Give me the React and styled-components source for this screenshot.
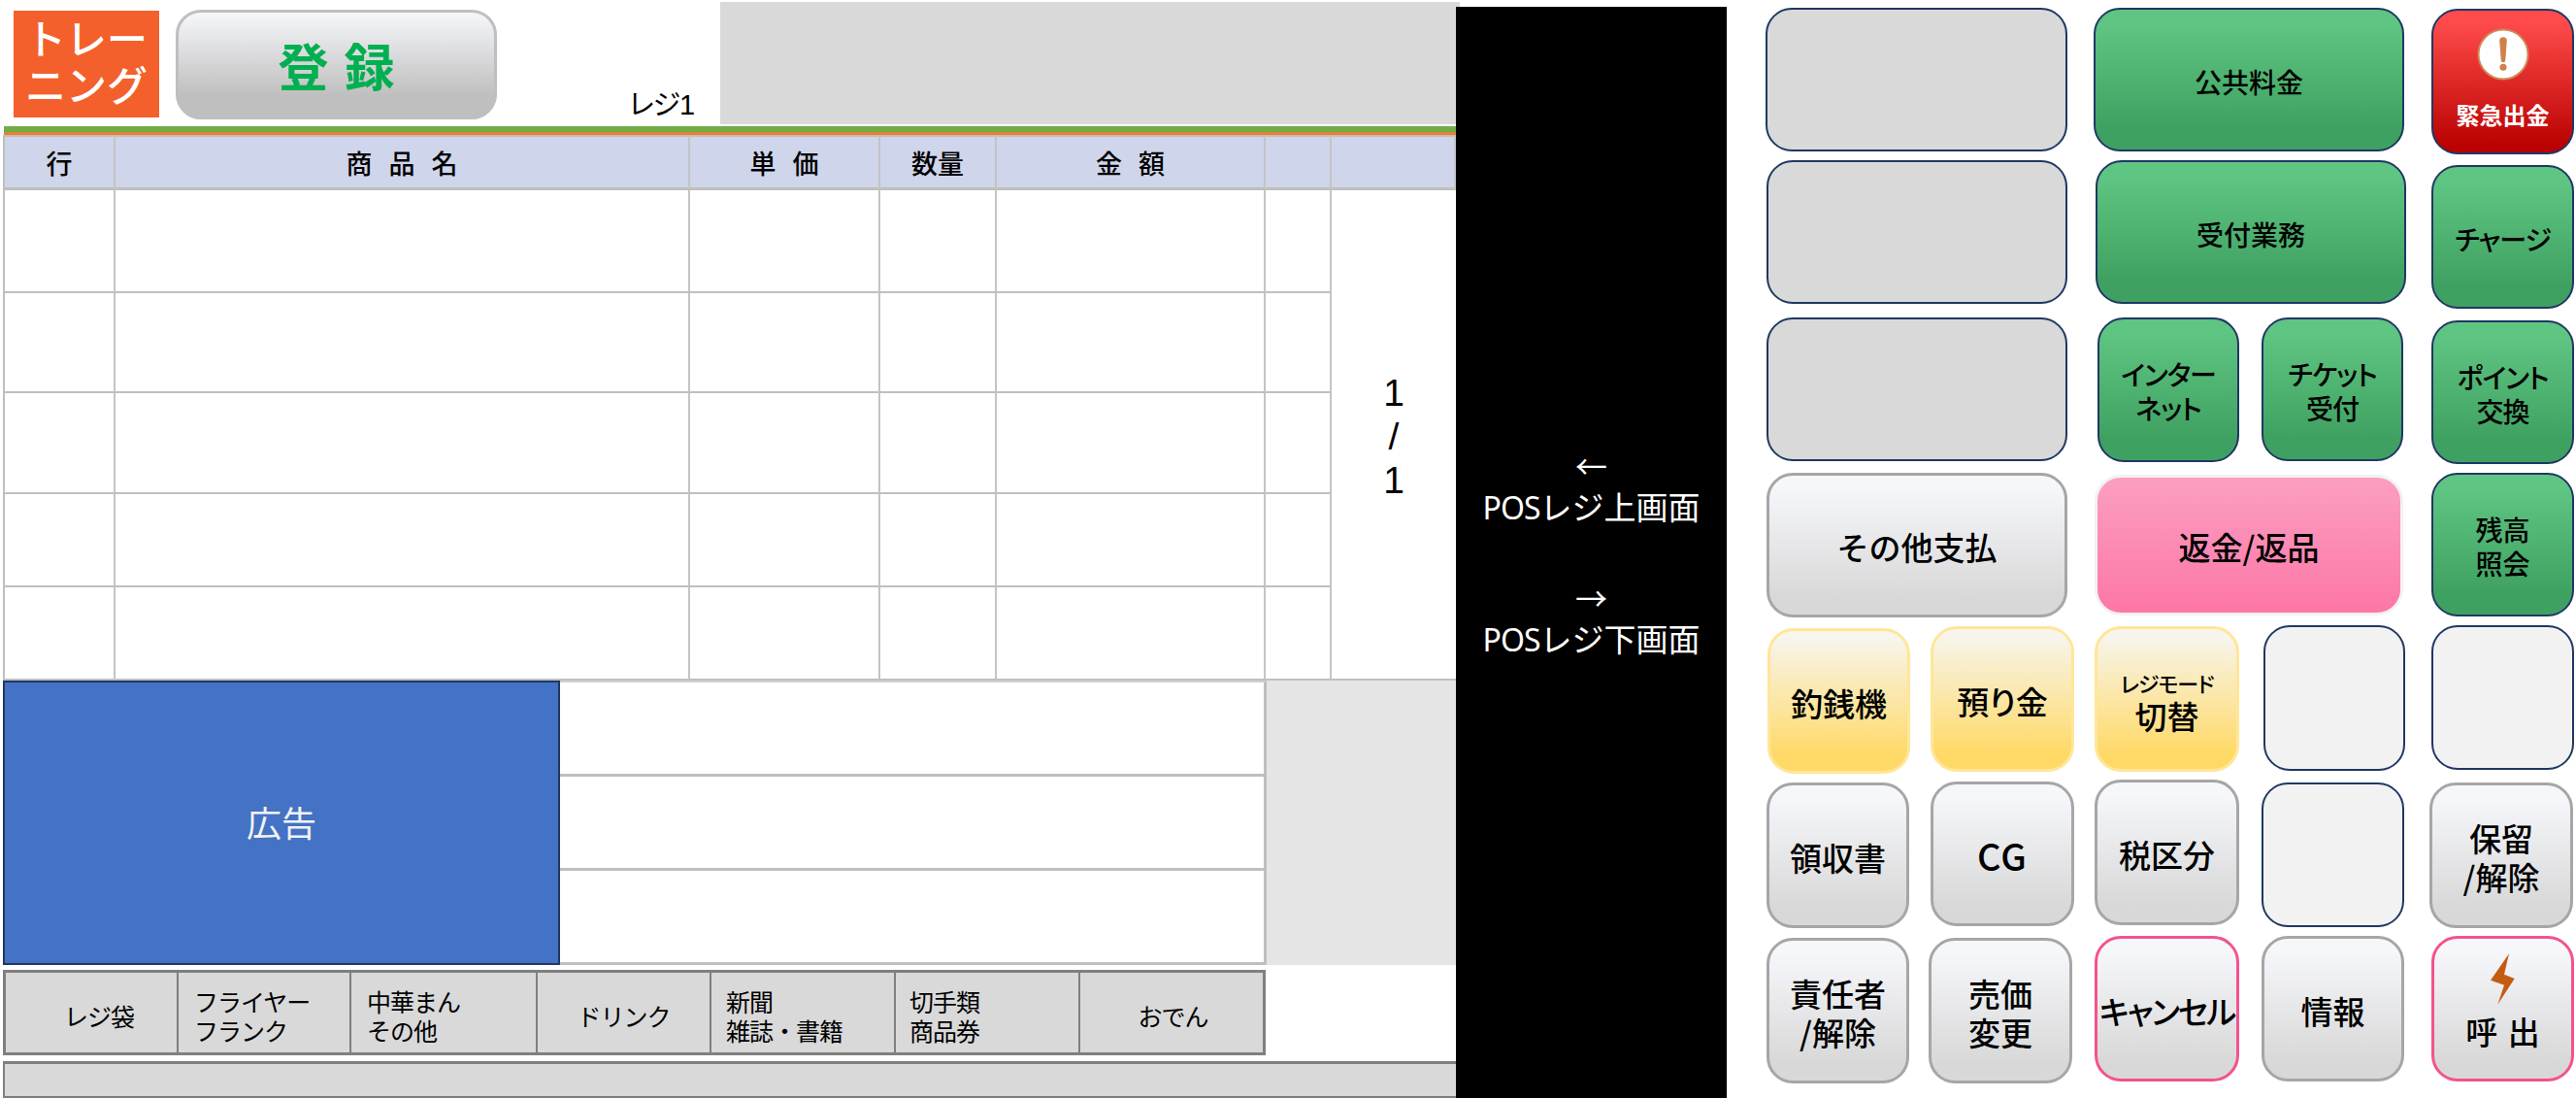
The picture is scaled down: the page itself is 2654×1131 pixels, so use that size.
import React from "react";
import styled, { createGlobalStyle } from "styled-components";

const GlobalStyle = createGlobalStyle`
  html, body {
    margin: 0;
    padding: 0;
    background: #fff;
    overflow: hidden;
  }
  * {
    box-sizing: border-box;
  }
`;

const FONT = `"Noto Sans CJK JP", "Noto Sans", sans-serif`;
const LATIN_FONT = `"Liberation Sans", "Noto Sans CJK JP", sans-serif`;
const NAVY = "#1f3864";

const Page = styled.div`
  display: flex;
  width: 2654px;
  height: 1131px;
  overflow: hidden;
  font-family: ${FONT};
  color: #000;
`;

const LeftPanel = styled.div`
  flex: none;
  width: 1500px;
`;

const TopBar = styled.div`
  display: flex;
  width: 1504px;
  height: 130px;
`;

const TrainingBadge = styled.div`
  width: 150px;
  height: 110px;
  margin: 11px 0 0 14px;
  padding-top: 3px;
  background: #f4602c;
  color: #fff;
  font-size: 42px;
  font-weight: 500;
  line-height: 48px;
  text-align: center;
  white-space: nowrap;
`;

const RegisterButton = styled.div`
  display: flex;
  align-items: center;
  justify-content: center;
  width: 331px;
  height: 113px;
  margin: 10px 0 0 17px;
  border: 3px solid #bfbfbf;
  border-radius: 26px;
  background: linear-gradient(#f6f7fb 0%, #bfbfbf 80%);
  color: #00b050;
  font-size: 52px;
  font-weight: 700;
  word-spacing: 4px;
`;

const RegisterName = styled.div`
  align-self: flex-end;
  width: 94px;
  margin: 0 0 5px 136px;
  font-family: ${LATIN_FONT};
  font-size: 29px;
  line-height: 34px;
  letter-spacing: -1px;
  font-feature-settings: "palt";
`;

const InfoBlock = styled.div`
  flex: 1;
  height: 126px;
  margin-top: 2px;
  background: #d9d9d9;
`;

const GreenRule = styled.div`
  height: 9px;
  margin-left: 4px;
  border-bottom: 3px solid #ed7d31;
  background: #70ad47;
`;

const SalesGrid = styled.div`
  display: grid;
  grid-template-columns: 116px 592px 196px 120px 277px 68px 128px;
  grid-template-rows: 57px 106px 103px 104px 96px 96px;
  width: 1497px;
  margin-left: 3px;
`;

const HeadCell = styled.div`
  display: flex;
  align-items: center;
  justify-content: center;
  border-top: 2px solid #bfbfbf;
  border-bottom: 3px solid #bfbfbf;
  border-right: 2px solid #c4c4c4;
  border-left: ${(p) => (p.$first ? "2px solid #bfbfbf" : "0")};
  background: #cfd5ea;
  font-size: 27px;
  font-weight: 500;
  word-spacing: 11px;
`;

const BodyCell = styled.div`
  border-bottom: 2px solid #bfbfbf;
  border-right: 2px solid #c4c4c4;
  border-left: ${(p) => (p.$first ? "2px solid #bfbfbf" : "0")};
`;

const PageCell = styled.div`
  grid-column: 7;
  grid-row: 2 / span 5;
  display: flex;
  flex-direction: column;
  align-items: center;
  justify-content: center;
  padding-top: 4px;
  border-bottom: 2px solid #bfbfbf;
  font-family: ${LATIN_FONT};
  font-size: 39px;
  line-height: 45px;
`;

const AdSection = styled.div`
  display: flex;
  height: 293px;
`;

const AdBox = styled.div`
  display: flex;
  align-items: center;
  justify-content: center;
  flex: none;
  width: 574px;
  margin-left: 3px;
  padding-bottom: 4px;
  border: 2px solid ${NAVY};
  background: #4472c4;
  color: #f2f2f2;
  font-size: 36px;
`;

const MessageList = styled.div`
  display: flex;
  flex-direction: column;
  flex: none;
  width: 728px;
  border-right: 3px solid #bfbfbf;
  border-top: 2px solid #d0d0d0;
`;

const MessageRow = styled.div`
  flex: 1;
  border-bottom: 3px solid #bfbfbf;
`;

const GrayFill = styled.div`
  flex: 1;
  background: #e5e5e5;
`;

const ShortcutStrip = styled.div`
  display: grid;
  grid-template-columns: 178px 178px 192px 179px 190px 190px 191px;
  width: 1301px;
  height: 88px;
  margin: 5px 0 0 3px;
  border: 3px solid #7f7f7f;
  background: #d9d9d9;
`;

const Shortcut = styled.div`
  display: flex;
  flex-direction: column;
  justify-content: center;
  align-items: ${(p) => (p.$center ? "center" : "flex-start")};
  padding: 6px 0 0 ${(p) => p.$pad || 0}px;
  border-right: ${(p) => (p.$last ? "0" : "2px solid #7f7f7f")};
  font-size: 25px;
  line-height: 30px;
  letter-spacing: -1px;
  white-space: nowrap;
`;

const StatusBar = styled.div`
  width: 1497px;
  height: 38px;
  margin: 6px 0 0 3px;
  border-top: 3px solid #7f7f7f;
  border-left: 2px solid #7f7f7f;
  border-bottom: 2px solid #7f7f7f;
  background: #d9d9d9;
`;

const BlackPanel = styled.div`
  display: flex;
  flex-direction: column;
  align-items: center;
  flex: none;
  width: 279px;
  margin-top: 7px;
  padding-top: 451px;
  background: #000;
  color: #fff;
  font-size: 33px;
  line-height: 42px;
  white-space: nowrap;
`;

const ScreenLink = styled.div`
  text-align: center;
  margin-bottom: ${(p) => p.$gap || 0}px;
`;

const ScreenPrefix = styled.span`
  font-family: "Noto Sans", sans-serif;
  font-size: 32px;
  letter-spacing: -1px;
`;

const KeyPanel = styled.div`
  flex: 1;
  padding: 8px 0 0 40px;
`;

const KeyColumns = styled.div`
  display: flex;
  height: 628px;
`;

const KeyColumn = styled.div`
  flex: none;
  width: ${(p) => p.$w}px;
  margin-left: ${(p) => p.$ml || 0}px;
`;

const KeyRow = styled.div`
  display: flex;
  align-items: flex-start;
  height: ${(p) => p.$h}px;
  margin-top: ${(p) => p.$mt || 0}px;
`;

const tones = {
  gray: `background: #d9d9d9; border: 2px solid ${NAVY};`,
  blank: `background: #f2f2f2; border: 2px solid ${NAVY};`,
  green: `background: linear-gradient(#5fc582 10%, #3fa161 85%); border: 2px solid ${NAVY};`,
  red: `background: linear-gradient(#ff4b4b 8%, #bb0202 95%); border: 2px solid ${NAVY}; color: #fff;`,
  silver: `background: linear-gradient(#f6f7fb 8%, #d8d8d8 88%); border: 3px solid #a6a6a6;`,
  alert: `background: linear-gradient(#f6f7fb 8%, #d8d8d8 88%); border: 3px solid #f4528f;`,
  yellow: `background: linear-gradient(#f7f5ec 5%, #ffd966 90%); border: 3px solid #ffe699;`,
  pink: `background: linear-gradient(#fb9dc0 5%, #fd78a8 95%); border: 3px solid #f2f2f2;`,
};

const Key = styled.div`
  display: flex;
  flex-direction: column;
  align-items: center;
  justify-content: ${(p) => (p.$iconTop ? "flex-start" : "center")};
  flex: none;
  width: ${(p) => p.$w}px;
  height: ${(p) => p.$h}px;
  margin-top: ${(p) => p.$mt || 0}px;
  margin-left: ${(p) => p.$ml || 0}px;
  padding-top: ${(p) => (p.$iconTop ? p.$iconTop : 3)}px;
  border-radius: 27px;
  ${(p) => tones[p.$tone]}
  font-size: ${(p) => p.$fs || 33}px;
  font-weight: 500;
  line-height: ${(p) => p.$lh || 40}px;
  letter-spacing: ${(p) => p.$ls || 0}px;
  text-align: center;
  white-space: nowrap;
  ${(p) => (p.$kana ? `font-feature-settings: "palt";` : "")}
`;

const SmallLine = styled.span`
  font-size: 22px;
  line-height: 30px;
  letter-spacing: -1px;
  font-feature-settings: "palt";
`;

const KeyCaption = styled.span`
  margin-top: ${(p) => p.$mt || 0}px;
  font-size: ${(p) => p.$fs}px;
  font-weight: ${(p) => p.$weight || 500};
  line-height: 32px;
  word-spacing: ${(p) => p.$ws || 0}px;
`;

const HEADERS = ["行", "商 品 名", "単 価", "数量", "金 額", "", ""];
const ROW_COUNT = 5;
const CELLS_PER_ROW = 6;

const SHORTCUTS = [
  { lines: ["レジ袋"], center: true, pad: 16 },
  { lines: ["フライヤー", "フランク"], pad: 16 },
  { lines: ["中華まん", "その他"], pad: 16 },
  { lines: ["ドリンク"], center: true },
  { lines: ["新聞", "雑誌・書籍"], pad: 15 },
  { lines: ["切手類", "商品券"], pad: 14 },
  { lines: ["おでん"], center: true },
];

function WarningIcon() {
  return (
    <svg width="54" height="54" viewBox="0 0 55 55">
      <circle cx="27.5" cy="27.5" r="26" fill="#fff" stroke="#cf8a55" strokeWidth="2" />
      <path d="M23.6 12.5a4 4 0 0 1 7.8 0l-1.6 21a2.3 2.3 0 0 1-4.6 0z" fill="#d0814a" />
      <circle cx="27.5" cy="41" r="3.6" fill="#d0814a" />
    </svg>
  );
}

function BoltIcon() {
  return (
    <svg width="25" height="53" viewBox="0 0 75 157">
      <path d="M57 0 0 82l42 15-20 60 52-80-32-13z" fill="#c55a11" />
    </svg>
  );
}

export default function App() {
  return (
    <Page>
      <GlobalStyle />
      <LeftPanel>
        <TopBar>
          <TrainingBadge>
            トレー
            <br />
            ニング
          </TrainingBadge>
          <RegisterButton>登 録</RegisterButton>
          <RegisterName>レジ1</RegisterName>
          <InfoBlock />
        </TopBar>
        <GreenRule />
        <SalesGrid>
          {HEADERS.map((label, i) => (
            <HeadCell key={i} $first={i === 0}>
              {label}
            </HeadCell>
          ))}
          {Array.from({ length: ROW_COUNT * CELLS_PER_ROW }, (_, i) => (
            <BodyCell key={i} $first={i % CELLS_PER_ROW === 0} />
          ))}
          <PageCell>
            <span>1</span>
            <span>/</span>
            <span>1</span>
          </PageCell>
        </SalesGrid>
        <AdSection>
          <AdBox>広告</AdBox>
          <MessageList>
            <MessageRow />
            <MessageRow />
            <MessageRow />
          </MessageList>
          <GrayFill />
        </AdSection>
        <ShortcutStrip>
          {SHORTCUTS.map((item, i) => (
            <Shortcut
              key={i}
              $center={item.center}
              $pad={item.pad}
              $last={i === SHORTCUTS.length - 1}
            >
              {item.lines.map((line) => (
                <span key={line}>{line}</span>
              ))}
            </Shortcut>
          ))}
        </ShortcutStrip>
        <StatusBar />
      </LeftPanel>

      <BlackPanel>
        <ScreenLink $gap={50}>
          ←
          <br />
          <ScreenPrefix>POS</ScreenPrefix>レジ上画面
        </ScreenLink>
        <ScreenLink>
          →
          <br />
          <ScreenPrefix>POS</ScreenPrefix>レジ下画面
        </ScreenLink>
      </BlackPanel>

      <KeyPanel>
        <KeyColumns>
          <KeyColumn $w={311}>
            <Key $tone="gray" $w={311} $h={148} />
            <Key $tone="gray" $w={310} $h={148} $mt={9} $ml={1} />
            <Key $tone="gray" $w={310} $h={148} $mt={14} $ml={1} />
            <Key $tone="silver" $w={310} $h={149} $mt={12} $ml={1}>
              その他支払
            </Key>
          </KeyColumn>
          <KeyColumn $w={322} $ml={27}>
            <Key $tone="green" $w={320} $h={148} $fs={28}>
              公共料金
            </Key>
            <Key $tone="green" $w={320} $h={148} $mt={9} $ml={2} $fs={28}>
              受付業務
            </Key>
            <KeyRow $h={149} $mt={14}>
              <Key $tone="green" $w={146} $h={149} $ml={4} $fs={28} $lh={35} $ls={-1} $kana>
                インター
                <br />
                ネット
              </Key>
              <Key $tone="green" $w={146} $h={148} $ml={23} $fs={28} $lh={35} $ls={-1} $kana>
                チケット
                <br />
                受付
              </Key>
            </KeyRow>
            <Key $tone="pink" $w={318} $h={145} $mt={13} $ml={1}>
              返金/返品
            </Key>
          </KeyColumn>
          <KeyColumn $w={147} $ml={26}>
            <Key $tone="red" $w={147} $h={150} $mt={1} $iconTop={18}>
              <WarningIcon />
              <KeyCaption $fs={24} $mt={19} $weight={700}>
                緊急出金
              </KeyCaption>
            </Key>
            <Key $tone="green" $w={147} $h={148} $mt={11} $fs={28} $ls={-1} $kana>
              チャージ
            </Key>
            <Key $tone="green" $w={147} $h={148} $mt={12} $fs={28} $lh={35} $ls={-1} $kana>
              ポイント
              <br />
              交換
            </Key>
            <Key $tone="green" $w={147} $h={148} $mt={9} $fs={28} $lh={35}>
              残高
              <br />
              照会
            </Key>
          </KeyColumn>
        </KeyColumns>

        <KeyRow $h={159} $mt={8}>
          <Key $tone="yellow" $w={147} $h={150} $mt={3} $ml={2}>
            釣銭機
          </Key>
          <Key $tone="yellow" $w={148} $h={150} $mt={1} $ml={21} $kana>
            預り金
          </Key>
          <Key $tone="yellow" $w={149} $h={150} $mt={1} $ml={21} $lh={38}>
            <SmallLine>レジモード</SmallLine>
            切替
          </Key>
          <Key $tone="blank" $w={146} $h={150} $ml={25} />
          <Key $tone="blank" $w={147} $h={149} $ml={27} />
        </KeyRow>
        <KeyRow $h={161}>
          <Key $tone="silver" $w={147} $h={150} $mt={3} $ml={1}>
            領収書
          </Key>
          <Key $tone="silver" $w={148} $h={149} $mt={2} $ml={22} $fs={38} $ls={1}>
            CG
          </Key>
          <Key $tone="silver" $w={149} $h={150} $ml={21}>
            税区分
          </Key>
          <Key $tone="blank" $w={147} $h={149} $mt={3} $ml={23} />
          <Key $tone="silver" $w={148} $h={150} $mt={3} $ml={26}>
            保留
            <br />
            /解除
          </Key>
        </KeyRow>
        <KeyRow $h={150}>
          <Key $tone="silver" $w={147} $h={150} $mt={2} $ml={1}>
            責任者
            <br />
            /解除
          </Key>
          <Key $tone="silver" $w={148} $h={150} $mt={2} $ml={20}>
            売価
            <br />
            変更
          </Key>
          <Key $tone="alert" $w={149} $h={150} $ml={23} $ls={-2} $kana>
            キャンセル
          </Key>
          <Key $tone="silver" $w={147} $h={150} $ml={23}>
            情報
          </Key>
          <Key $tone="alert" $w={147} $h={150} $ml={28} $iconTop={15}>
            <BoltIcon />
            <KeyCaption $fs={33} $mt={11} $ws={3}>
              呼 出
            </KeyCaption>
          </Key>
        </KeyRow>
      </KeyPanel>
    </Page>
  );
}
